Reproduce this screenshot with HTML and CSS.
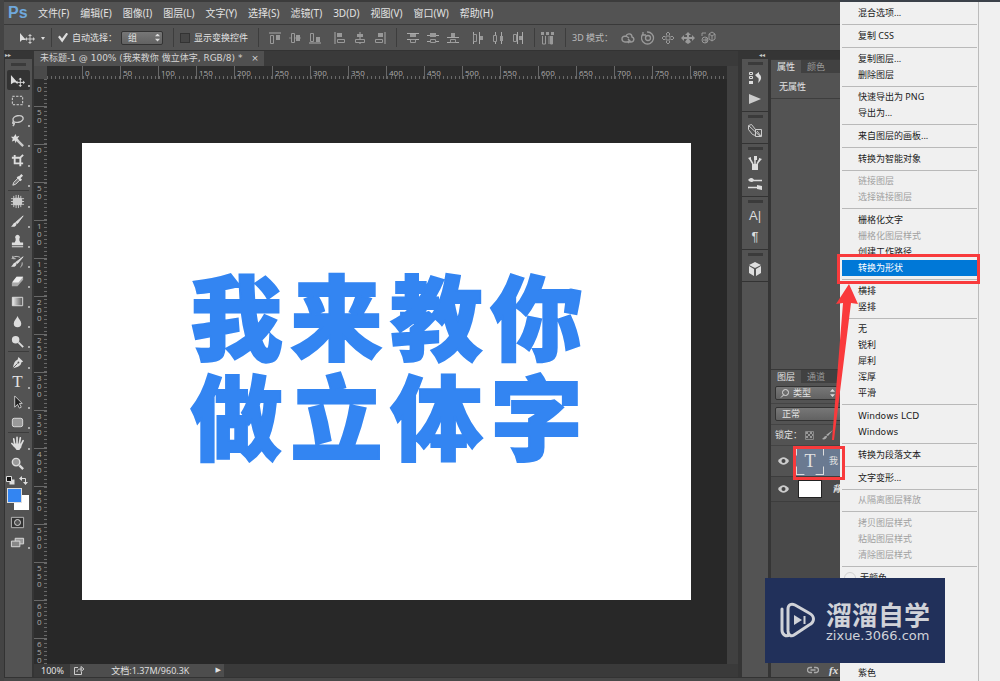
FILE: index.html
```
<!DOCTYPE html>
<html lang="zh-CN">
<head>
<meta charset="utf-8">
<title>Ps</title>
<link rel="stylesheet" href="styles.css">
</head>
<body>
<div class="app">
  <nav class="menubar">
    <span class="logo">Ps</span>
    <button>文件(F)</button><button>编辑(E)</button><button>图像(I)</button><button>图层(L)</button><button>文字(Y)</button><button>选择(S)</button><button>滤镜(T)</button><button>3D(D)</button><button>视图(V)</button><button>窗口(W)</button><button>帮助(H)</button>
  </nav>

  <div class="options">
    <svg class="opt-move" width="28" height="14" viewBox="0 0 28 14"><path d="M1 2v9l2-2h4z" fill="#ddd"/><path d="M11 4v8M7 8h8" stroke="#ccc"/><path d="M11 3l2 2h-4zM11 13l2-2h-4zM6 8l2-2v4zM16 8l-2-2v4z" fill="#ccc"/><path d="M22 6h4l-2 3z" fill="#ddd"/></svg>
    <i class="vsep first"></i>
    <label class="check"><input type="checkbox" checked>自动选择：</label>
    <span class="select group"><select aria-label="自动选择"><option>组</option></select></span>
    <i class="vsep"></i>
    <label class="check"><input type="checkbox">显示变换控件</label>
    <i class="vsep"></i>
    <div class="icons">
      <svg width="12" height="12"><path d="M0 1h12" stroke="#aaa"/><path d="M1.500 3.500h3v8h-3z" fill="none" stroke="#999"/><path d="M7 3h4v5H7z" fill="#999"/></svg>
      <svg width="12" height="12"><path d="M0 6h12" stroke="#888"/><path d="M2.500 1.500h3v9h-3z" fill="#535353" stroke="#999"/><path d="M7 3h4v6H7z" fill="#999"/></svg>
      <svg width="12" height="12"><path d="M0 11h12" stroke="#aaa"/><path d="M1.500 1.500h3v8h-3z" fill="none" stroke="#999"/><path d="M7 5h4v5H7z" fill="#999"/></svg>
    </div>
    <div class="icons">
      <svg width="12" height="12"><path d="M1 0v12" stroke="#aaa"/><path d="M3 1h5v4H3z" fill="#999"/><path d="M3.500 7.500h7v3h-7z" fill="none" stroke="#999"/></svg>
      <svg width="12" height="12"><path d="M6 0v12" stroke="#aaa"/><path d="M3 2h6v3H3z" fill="#999"/><path d="M1.500 7.500h9v3h-9z" fill="#535353" stroke="#999"/></svg>
      <svg width="12" height="12"><path d="M11 0v12" stroke="#aaa"/><path d="M4 1h5v4H4z" fill="#999"/><path d="M1.500 7.500h7v3h-7z" fill="none" stroke="#999"/></svg>
    </div>
    <i class="vsep"></i>
    <div class="icons">
      <svg width="12" height="12"><path d="M0 1.500h12M0 7.500h12" stroke="#aaa"/><path d="M3 2h6v3H3z" fill="#999"/><path d="M3.500 7.500h5v3h-5z" fill="none" stroke="#999"/></svg>
      <svg width="12" height="12"><path d="M0 3.500h12M0 9.500h12" stroke="#aaa"/><path d="M3 1h6v4H3z" fill="#999"/><path d="M3.500 7.500h5v3h-5z" fill="#535353" stroke="#999"/></svg>
      <svg width="12" height="12"><path d="M0 5.500h12M0 10.500h12" stroke="#aaa"/><path d="M4 1h4v4H4z" fill="#999"/><path d="M3.500 7.500h5v3h-5z" fill="none" stroke="#999"/></svg>
    </div>
    <div class="icons">
      <svg width="12" height="12"><path d="M1.500 0v12M7.500 0v12" stroke="#aaa"/><path d="M1.500 2.500h3v7h-3z" fill="none" stroke="#999"/><path d="M8 4h3v4H8z" fill="#999"/></svg>
      <svg width="12" height="12"><path d="M3.500 0v12M9.500 0v12" stroke="#aaa"/><path d="M1.500 3.500h3v6h-3z" fill="#535353" stroke="#999"/><path d="M8 4h3v5H8z" fill="#999"/></svg>
      <svg width="12" height="12"><path d="M5.500 0v12M10.500 0v12" stroke="#aaa"/><path d="M1.500 2.500h3v7h-3z" fill="none" stroke="#999"/><path d="M7 4h3v4H7z" fill="#999"/></svg>
    </div>
    <i class="vsep"></i>
    <svg width="14" height="14"><path d="M1.500 5v8M4.500 5v8h-3M8 5v8M11.500 5v8h-2" fill="none" stroke="#999"/><path d="M0 1h3v3H0zM5 1h3v3H5zM10 1h3v3h-3zM9 5h3v8H9z" fill="#999"/></svg>
    <i class="vsep"></i>
    <span class="mode">3D 模式：</span>
    <div class="icons three-d">
      <svg width="14" height="14" fill="none" stroke="#999" stroke-width="1.400"><path d="M1 8c0-2 2-3 4-3 1-3 6-3 6 1 3 1 2 5-1 5H6M1 8c0 3 4 4 7 2M7 8l2 2-2 2M5 5l3 2"/></svg>
      <svg width="14" height="14" fill="none" stroke="#999" stroke-width="1.300"><path d="M2 3a6 6 0 1 0 4-2M2 1v3h3"/><circle cx="7" cy="7" r="2.500"/></svg>
      <svg width="14" height="14" fill="none" stroke="#999"><path d="M7 1l2 2-1 1v2h2l1-1 2 2-2 2-1-1H8v2l1 1-2 2-2-2 1-1V8H4L3 9 1 7l2-2 1 1h2V4L5 3z"/></svg>
      <svg width="14" height="14"><path d="M7 1l3 3H8v2h3V4l3 3-3 3V8H8l2 3-3 2-3-2 2-3H3v2L0 7l3-3v2h3V4H4z" fill="#999"/></svg>
      <svg width="15" height="14" fill="none" stroke="#999"><path d="M8 3l3-2 3 2v5l-3 2-3-2zM8 3l3 2 3-2M11 5v5"/><circle cx="4" cy="9" r="3"/><path d="M1 5V2h4M5 7v5M2 9h5"/></svg>
    </div>
  </div>

  <main class="work">
    <aside class="tools">
      <div class="dock-head">▸▸</div>
      <i class="grip"></i>
      <button class="active" aria-label="移动"><svg viewBox="0 0 16 16"><path d="M1 2v10l3-2h4z" fill="#ddd"/><path d="M11 6v8M7 10h8" stroke="#ddd"/><path d="M11 5l2 2H9zM11 15l2-2H9zM6 10l2-2v4zM16 10l-2-2v4z" fill="#ddd"/></svg></button>
      <button aria-label="选框"><svg viewBox="0 0 16 16"><path d="M2.500 3.500h11v9h-11z" fill="none" stroke="#ddd" stroke-dasharray="2.500 1.500"/></svg></button>
      <button aria-label="套索"><svg viewBox="0 0 16 16" fill="none" stroke="#ccc" stroke-width="1.500"><ellipse cx="8.500" cy="6.500" rx="5.500" ry="3.500" transform="rotate(-12 8 6)"/><path d="M4 9c-2 1-1 3 0 2s1 1-1 3"/></svg></button>
      <button aria-label="魔棒"><svg viewBox="0 0 16 16"><path d="M7 7l7 7" stroke="#ccc" stroke-width="2.500"/><path d="M6 1l1 3 3-1-2 3 2 2-3 0-1 3-1-3-3 1 1-3-2-2 3 0z" fill="#ddd"/></svg></button>
      <button aria-label="裁剪"><svg viewBox="0 0 16 16" fill="none" stroke="#ddd" stroke-width="2"><path d="M5 2v9h9M2 5h9v9M11 5l3-3"/></svg></button>
      <button aria-label="吸管"><svg viewBox="0 0 16 16"><path d="M3 13l1-3 5-5 2 2-5 5z" fill="#777" stroke="#ddd"/><path d="M8 4l4 4M10 5l3-3" stroke="#ddd" stroke-width="2.500"/></svg></button>
      <hr>
      <button aria-label="修复"><svg viewBox="0 0 16 16"><path d="M4 2v12M6.500 1v14M9 1v14M11.500 2v12M1 5h14M1 8h14M1 11h14" stroke="#ccc"/><rect x="3" y="4" width="10" height="8" rx="3" fill="#ccc"/></svg></button>
      <button aria-label="画笔"><svg viewBox="0 0 16 16"><path d="M14 2l-6 8-2-1z" fill="#ddd" stroke="#ddd"/><path d="M7 10c0 4-4 4-6 3 2 0 2-4 5-4z" fill="#ddd"/></svg></button>
      <button aria-label="图章"><svg viewBox="0 0 16 16" fill="#ddd"><path d="M6 7V5a2.500 2.500 0 1 1 4 0v2l1 2h3v3H2V9h3zM2 13h12v1H2z"/></svg></button>
      <button aria-label="历史画笔"><svg viewBox="0 0 16 16"><path d="M14 3l-6 7-2-1z" stroke="#ddd" fill="#ddd"/><path d="M7 10c0 4-4 4-6 3 2 0 2-4 5-4z" fill="#ddd"/><path d="M2 5c2-3 7-3 9-1M3 2v3h3M11 14c2-1 2-3 2-5" fill="none" stroke="#ccc"/></svg></button>
      <button aria-label="橡皮擦"><svg viewBox="0 0 16 16"><path d="M7 3h7v3l-6 7H2v-3z" fill="#aaa"/><path d="M7 3h7l-5 6H2z" fill="#eee"/></svg></button>
      <button aria-label="渐变"><svg viewBox="0 0 16 16"><defs><linearGradient id="fade"><stop stop-color="#eee"/><stop offset="1" stop-color="#555"/></linearGradient></defs><path d="M2.500 3.500h11v9h-11z" fill="url(#fade)" stroke="#ddd"/></svg></button>
      <button aria-label="模糊"><svg viewBox="0 0 16 16"><path d="M8 2c1 3 4 5 4 8a4 4 0 0 1-8 0c0-3 3-5 4-8z" fill="#ddd"/></svg></button>
      <button aria-label="减淡"><svg viewBox="0 0 16 16"><circle cx="6" cy="6" r="4" fill="#ddd"/><path d="M9 9l5 5" stroke="#ddd" stroke-width="2"/></svg></button>
      <hr>
      <button aria-label="钢笔"><svg viewBox="0 0 16 16"><path d="M9 2l5 5-2 1c0 3-3 5-9 6 1-5 2-8 5-9z" fill="#ddd"/><path d="M3 14l5-5" stroke="#555"/><circle cx="9" cy="8" r="1" fill="#555"/></svg></button>
      <button aria-label="文字"><span class="type">T</span></button>
      <button aria-label="路径选择"><svg viewBox="0 0 16 16"><path d="M5 1v12l3-3 2 4 2-1-2-4h3z" fill="#222" stroke="#ccc"/></svg></button>
      <button aria-label="圆角矩形"><svg viewBox="0 0 16 16"><rect x="2.500" y="3.500" width="11" height="9" rx="2" fill="#999" stroke="#ddd"/></svg></button>
      <hr>
      <button aria-label="抓手"><svg viewBox="0 0 16 16"><path d="M5 9L4 3M7.500 8V1.500M10 8l1-6M12 9l2-4M5 11L2 8" stroke="#ddd" stroke-width="1.800" stroke-linecap="round"/><path d="M4 8h9l-1 4-2 3H7l-3-4z" fill="#ddd"/></svg></button>
      <button class="plain" aria-label="缩放"><svg viewBox="0 0 16 16"><circle cx="6.500" cy="6.500" r="4" fill="#999" stroke="#ddd" stroke-width="1.500"/><path d="M10 10l4 4" stroke="#ddd" stroke-width="2.500"/></svg></button>
      <div class="mini">
        <svg width="9" height="9"><path d="M3.500 3.500h5v5h-5z" fill="#ddd"/><path d="M.5.5h5v5h-5z" fill="#111" stroke="#ddd"/></svg>
        <svg width="9" height="9"><path d="M2 2.500h4.500V7" fill="none" stroke="#ddd"/><path d="M0 2.500L3 0v5zM6.500 9L4 6h5z" fill="#ddd"/></svg>
      </div>
      <div class="swatches"><button class="back" aria-label="背景色"></button><button class="fore" aria-label="前景色"></button></div>
      <button class="plain" aria-label="快速蒙版"><svg viewBox="0 0 16 16"><path d="M1.500 2.500h13v11h-13z" fill="#333" stroke="#bbb"/><circle cx="8" cy="8" r="3.200" fill="#555" stroke="#ddd"/></svg></button>
      <button aria-label="屏幕模式"><svg viewBox="0 0 16 16"><path d="M5.500 3.500h9v6h-9z" fill="#999" stroke="#ddd"/><path d="M1.500 6.500h9v6h-9z" fill="#888" stroke="#ddd"/></svg></button>
    </aside>

    <section class="doc">
      <div class="tabs"><span class="tab">未标题-1 @ 100% (我来教你 做立体字, RGB/8) * <button aria-label="关闭">×</button></span></div>
      <div class="board">
        <div class="corner"></div>
        <div class="ruler-x"><span class="lead"></span><span>0</span><span>50</span><span>100</span><span>150</span><span>200</span><span>250</span><span>300</span><span>350</span><span>400</span><span>450</span><span>500</span><span>550</span><span>600</span><span>650</span><span>700</span><span>750</span><span>800</span></div>
        <div class="gutter"></div>
        <div class="ruler-y"><span class="lead">0</span><span>50</span><span>0</span><span>50</span><span>100</span><span>150</span><span>200</span><span>250</span><span>300</span><span>350</span><span>400</span><span>450</span><span>500</span><span>550</span><span>600</span><span>650</span></div>
        <div class="stage"><div class="paper"><p><span>我</span><span>来</span><span>教</span><span>你</span><span>做</span><span>立</span><span>体</span><span>字</span></p></div></div>
      </div>
      <div class="status">
        <span class="zoom">100%</span>
        <div class="info"><svg width="12" height="10" fill="none" stroke="#ccc"><path d="M5 1.500H1.500v7h7V6"/><path d="M4 6c0-3 2-3 5-3M8 .5L11 3 8 5.500z"/></svg><span>文档:1.37M/960.3K</span><b>▶</b></div>
      </div>
    </section>

    <aside class="dock">
      <div class="dock-head">◂◂</div>
      <div class="set"><i class="grip"></i>
        <svg viewBox="0 0 16 16"><path d="M2.500 2.500h3v2h-3zM2.500 6.500h3v2h-3z" fill="none" stroke="#ddd"/><path d="M2 11h4v3H2z" fill="#ddd"/><path d="M8 5l4-3v2c3 2 3 6-1 9 1-3 1-5-.5-6L11 8z" fill="#ddd"/></svg>
        <svg viewBox="0 0 16 16"><path d="M2 3l12 5-12 5z" fill="#ccc"/></svg></div>
      <div class="set"><i class="grip"></i>
        <svg viewBox="0 0 16 16" fill="none" stroke="#ccc"><path d="M1.500 2.500l3-1 4 5v6l-3-1-4-5zM8.500 6.500h6v7h-6zM2 3l12 11M10 8l4 5"/></svg></div>
      <div class="set"><i class="grip"></i>
        <svg viewBox="0 0 16 16"><path d="M5 9h6v6H5z" fill="#ddd"/><path d="M6 9L3 4M8 9V2M10 9l3-5" stroke="#ddd" stroke-width="1.500"/><path d="M1 3l3-1v4zM7 1h3v4H7zM12 3l3 1-3 3z" fill="#ddd"/></svg>
        <svg viewBox="0 0 16 16"><path d="M2 4.500h13M1 11.500h13" stroke="#ddd" stroke-width="1.500"/><path d="M1 4c3-3 5-2 6 0-1 3-4 2-6 0zM10 9l5 1v4l-5-1z" fill="#ddd"/></svg></div>
      <div class="set"><i class="grip"></i>
        <span class="glyph">A|</span><span class="glyph">¶</span></div>
      <div class="set"><i class="grip"></i>
        <svg viewBox="0 0 16 16"><path d="M8 1l6 3-6 3-6-3zM2 5l5 3v7l-5-3zM14 5L9 8v7l5-3z" fill="#ddd"/></svg></div>
    </aside>

    <aside class="panels">
      <div class="panel-head"></div>
      <div class="panel-tabs"><button class="on">属性</button><button>颜色</button></div>
      <div class="props">无属性</div>
      <div class="blank"></div>
      <div class="panel-tabs"><button class="on">图层</button><button>通道</button></div>
      <div class="line"><span class="select kind"><svg width="9" height="9" fill="none" stroke="#ddd"><circle cx="5.500" cy="3.500" r="3"/><path d="M3.500 6L1 8.500"/></svg><select aria-label="类型"><option>类型</option></select></span></div>
      <div class="line"><span class="select blend"><select aria-label="混合模式"><option>正常</option></select></span></div>
      <div class="line lock">锁定：<svg width="9" height="9"><path d="M.5.5h8v8h-8z" fill="#555" stroke="#888"/><path d="M1 1h2v2H1zM5 1h2v2H5zM3 3h2v2H3zM7 3h1v2H7zM1 5h2v2H1zM5 5h2v2H5z" fill="#999"/></svg><svg width="12" height="10"><path d="M11 0L6 6 4 5zM5 6c0 3-3 4-5 3 2-1 2-3 4-3z" fill="#aaa"/></svg></div>
      <div class="layer chosen"><svg class="eye" width="11" height="8"><path d="M0 4c3-5 8-5 11 0-3 5-8 5-11 0z" fill="#ccc"/><circle cx="5.500" cy="4" r="2" fill="#444"/></svg><span class="thumb text">T</span><span>我</span></div>
      <div class="layer"><svg class="eye" width="11" height="8"><path d="M0 4c3-5 8-5 11 0-3 5-8 5-11 0z" fill="#ccc"/><circle cx="5.500" cy="4" r="2" fill="#444"/></svg><span class="thumb"></span><span class="locked">背</span></div>
      <div class="rest"></div>
      <div class="panel-foot"><svg width="12" height="8" fill="none" stroke="#aaa" stroke-width="1.300"><path d="M5 1.500H3a2.500 2.500 0 0 0 0 5h2M7 1.500h2a2.500 2.500 0 0 1 0 5H7M3.500 4h5"/></svg><span>fx</span></div>
    </aside>
  </main>
  <div class="edge"></div>
</div>

<div class="context">
  <div class="menu" role="menu">
    <button>混合选项...</button><hr>
    <button>复制 CSS</button><hr>
    <button>复制图层...</button><button>删除图层</button><hr class="tight">
    <button>快速导出为 PNG</button><button>导出为...</button><hr>
    <button>来自图层的画板...</button><hr>
    <button>转换为智能对象</button><hr class="tight">
    <button disabled>链接图层</button><button disabled>选择链接图层</button><hr>
    <button>栅格化文字</button><button disabled>栅格化图层样式</button><button>创建工作路径</button><button class="hot">转换为形状</button><hr>
    <button>横排</button><button>竖排</button><hr class="tight">
    <button>无</button><button>锐利</button><button>犀利</button><button>浑厚</button><button>平滑</button><hr>
    <button class="latin">Windows LCD</button><button class="latin">Windows</button><hr>
    <button>转换为段落文本</button><hr>
    <button>文字变形...</button><hr class="tight">
    <button disabled>从隔离图层释放</button><hr>
    <button disabled>拷贝图层样式</button><button disabled>粘贴图层样式</button><button disabled>清除图层样式</button><hr>
    <button class="radio">无颜色</button>
    <button class="last">紫色</button>
  </div>
</div>

<div class="mark item-mark"></div>
<div class="mark layer-mark"></div>
<svg class="arrow" width="30" height="160" viewBox="0 0 30 160"><path d="M20 0l9 20-7-1L5 156H3L14 19l-7 1z" fill="#fa3a3c"/></svg>

<div class="brand">
  <svg width="36" height="38" viewBox="0 0 36 38" fill="none" stroke="#d0d2d8" stroke-width="3" stroke-linecap="round"><path d="M2 7v21c0 5 4 7 8 5M8 28V7c0-4 3-6 7-4l14 8c6 3 6 9 0 12L14 33c-3 2-6 0-6-4"/><path d="M14 13l8 5-8 5z" fill="#d0d2d8" stroke="none"/><path d="M24.500 14v8" stroke-width="2" stroke-linecap="butt"/></svg>
  <div><strong>溜溜自学</strong><span>zixue.3066.com</span></div>
</div>
</body>
</html>
```
FILE: styles.css
```
* { box-sizing: border-box; }
body {
  margin: 0;
  height: 100vh;
  position: relative;
  overflow: hidden;
  background: #535353;
  color: #e2e2e2;
  font: 10px/14px "Noto Sans", "Noto Sans CJK SC", sans-serif;
}
button, select, input { font: inherit; color: inherit; margin: 0; padding: 0; border: 0; background: none; }
svg { display: block; flex: none; }
.app { height: 100%; display: flex; flex-direction: column; border-left: 4px solid #444; }

.menubar { height: 25px; flex: none; display: flex; align-items: center; gap: 11px; border-top: 2px solid #3c3c3c; border-bottom: 1px solid #393939; padding-left: 4px; white-space: nowrap; }
.logo { font: bold 16px/20px "Liberation Sans", sans-serif; color: #6fa8dc; width: 19px; }

.options { height: 26px; flex: none; display: flex; align-items: center; gap: 4px; padding-left: 15px; border-bottom: 1px solid #333; white-space: nowrap; font-size: 9px; }
.vsep { width: 1px; height: 19px; background: #3d3d3d; margin: 0 2px 0 6px; flex: none; }
.vsep.first { margin-left: 0; }
.check { display: flex; align-items: center; gap: 4px; }
.check input { appearance: none; width: 10px; height: 10px; background: #464646; border: 1px solid #333; }
.check input:checked { background: #ddd; clip-path: polygon(0 45%, 18% 30%, 40% 60%, 85% 0, 100% 15%, 42% 100%); border: 0; }
.select { display: flex; align-items: center; position: relative; height: 14px; background: linear-gradient(#777, #626262); border: 1px solid #333; border-radius: 2px; padding-left: 6px; }
.select select { appearance: none; flex: 1; min-width: 0; height: 12px; line-height: 12px; outline: 0; }
.group { width: 42px; }
.group::after, .kind::after { content: ""; width: 5px; height: 8px; margin-right: 2px; background: #ddd; clip-path: polygon(50% 0, 100% 35%, 0 35%, 0 65%, 100% 65%, 50% 100%, 0 65%, 0 35%); }
.icons { display: flex; gap: 8px; margin-left: 4px; }
.icons + .icons { margin-left: 9px; }
.icons.three-d { gap: 6px; margin-left: 4px; }
.mode { color: #bbb; }

.work { flex: 1; min-height: 0; display: flex; }
.dock-head { height: 8px; background: #353535; color: #ccc; font: 6px/8px "DejaVu Sans", sans-serif; flex: none; }
.grip { display: block; height: 3px; width: 15px; margin: 4px auto; background: #3b3b3b; flex: none; }

.tools { width: 28px; flex: none; border-left: 1px solid #333; display: flex; flex-direction: column; background: #535353; }
.tools > button { height: 20px; display: grid; place-items: center; position: relative; margin: 0 2px; padding-right: 2px; flex: none; }
.tools > button svg { width: 15px; height: 15px; }
.tools > button::after { content: ""; position: absolute; right: 0; bottom: 3px; width: 2px; height: 2px; background: #aaa; }
.tools > .plain::after { display: none; }
.tools .active { background: #333; border-radius: 2px; }
.tools hr { margin: 0 3px; border: 0; border-top: 1px solid #3c3c3c; flex: none; height: 1px; }
.type { font: 17px/18px "Liberation Serif", serif; }
.mini { display: flex; justify-content: space-between; padding: 3px 4px 3px 1px; flex: none; }
.swatches { display: grid; grid-template-columns: 7px 8px 7px; grid-template-rows: 7px 8px 7px; margin: 0 0 2px 2px; flex: none; }
.back { grid-area: 2 / 2 / 4 / 4; background: #fff; }
.fore { grid-area: 1 / 1 / 3 / 3; background: #3385f2; border: 1px solid #ddd; }

.doc { flex: 1; min-width: 0; display: flex; flex-direction: column; border-left: 2px solid #353535; background: #3a3a3a; }
.tabs { height: 15px; flex: none; display: flex; }
.tab { background: #505050; padding: 0 5px 0 6px; font-family: "DejaVu Sans", "Noto Sans CJK SC", sans-serif; font-size: 9px; line-height: 15px; white-space: nowrap; color: #d5d5d5; }
.tab button { margin-left: 6px; line-height: 12px; }
.board { flex: 1; min-height: 0; display: grid; grid-template: 13px minmax(0, 1fr) / 13px minmax(0, 1fr) 11px; background: #282828; }
.corner { background: #4a4a4a; }
.ruler-x { display: flex; overflow: hidden; background: repeating-linear-gradient(90deg, #686868 0 1px, #2d2d2d 1px 4px) bottom / 100% 3px no-repeat #2d2d2d; font: 8px/13px "Open Sans", sans-serif; color: #aaa; }
.ruler-x span { flex: none; width: 38px; border-left: 1px solid #686868; padding-left: 2px; }
.ruler-x .lead { width: 35px; border: 0; }
.gutter { grid-area: 1 / 3 / 3 / 4; background: #404040; }
.ruler-y { grid-column: 1; overflow: hidden; background: repeating-linear-gradient(#686868 0 1px, #2d2d2d 1px 4px) right / 3px 100% no-repeat #2d2d2d; font: 8px/8px "Open Sans", sans-serif; color: #aaa; }
.ruler-y span { display: block; height: 38px; border-top: 1px solid #686868; padding: 1px 7px 0 3px; width: 13px; word-break: break-all; }
.ruler-y .lead { height: 27px; border: 0; padding-top: 6px; }
.ruler-y span:last-child { height: auto; }
.stage { display: grid; align-items: center; min-width: 0; padding: 0 36px 0 35px; }
.paper { aspect-ratio: 4 / 3; background: #fff; display: grid; place-items: center; align-content: center; }
.paper p { display: grid; grid-template-columns: repeat(4, 100px); margin: 0 0 18px; font: 900 92px/100px "Noto Sans CJK SC", sans-serif; color: #3385f2; -webkit-text-stroke: 2px #3385f2; text-align: center; }
.status { height: 13px; flex: none; display: flex; align-items: center; font-size: 9px; line-height: 13px; }
.zoom { width: 36px; padding-left: 7px; }
.info { display: flex; align-items: center; width: 154px; padding: 0 3px; background: #4d4d4d; }
.info span { flex: 1; text-align: center; font-family: "Open Sans", "Noto Sans CJK SC", sans-serif; }
.info b { font: 7px/13px "DejaVu Sans", sans-serif; }

.dock { width: 33px; flex: none; border: solid #353535; border-width: 0 3px 0 4px; }
.dock .dock-head { text-align: right; padding-right: 3px; }
.set { display: flex; flex-direction: column; align-items: center; gap: 5px; border-bottom: 1px solid #333; padding-bottom: 4px; }
.set .grip { margin: 3px 0 0; }
.set svg { width: 16px; height: 16px; }
.glyph { font: 13px/16px "Liberation Sans", sans-serif; height: 16px; color: #ddd; }

.panels { width: 229px; flex: none; display: flex; flex-direction: column; font-size: 9px; }
.panel-head { height: 8px; background: #353535; }
.panel-tabs { display: flex; height: 14px; background: #414141; flex: none; border-top: 1px solid #383838; }
.panel-tabs button { width: 30px; color: #999; line-height: 13px; }
.panel-tabs .on { background: #535353; color: #e2e2e2; }
.props { height: 26px; padding: 7px 8px; border-bottom: 1px solid #3e3e3e; flex: none; }
.blank { flex: 1; }
.line { height: 21px; padding: 3px 4px; border-bottom: 1px solid #444; flex: none; }
.kind { width: 63px; gap: 4px; padding-left: 4px; }
.blend { width: 110px; }
.lock { display: flex; align-items: center; gap: 3px; }
.lock svg:last-child { margin-left: 5px; }
.layer { display: flex; align-items: center; height: 31px; padding-left: 7px; border-bottom: 1px solid #3d3d3d; flex: none; background: #4b4b4b; }
.layer + .layer { height: 25px; }
.layer.chosen { background: linear-gradient(90deg, #535353 22px, #6a7a91 22px); }
.thumb { width: 24px; height: 18px; margin: 0 10px 0 9px; border: 1px solid #222; background: #fff; }
.thumb.text { width: 28px; height: 28px; margin: 0 5px 0 7px; border: 1px solid #ddd; background: transparent; font: 18px/26px "Liberation Serif", serif; text-align: center; clip-path: polygon(0 0, 30% 0, 30% 5%, 70% 5%, 70% 0, 100% 0, 100% 30%, 95% 30%, 95% 70%, 100% 70%, 100% 100%, 70% 100%, 70% 95%, 30% 95%, 30% 100%, 0 100%, 0 70%, 5% 70%, 5% 30%, 0 30%); }
.locked { font-weight: bold; font-style: italic; }
.rest { height: 159px; background: #494949; flex: none; }
.panel-foot { height: 16px; display: flex; align-items: center; gap: 10px; padding-left: 36px; border-top: 1px solid #333; flex: none; }
.panel-foot span { font: italic bold 11px/14px "Liberation Serif", serif; }
.edge { height: 4px; flex: none; border-top: 1px solid #333; background: #484848; }

.context { position: absolute; top: 0; right: 0; bottom: 0; width: 160px; background: #f0f0f0; border-top: 2px solid #3b4149; color: #1b1b1b; font-size: 9px; }
.menu { width: 139px; height: 100%; display: flex; flex-direction: column; padding: 3px 1px 0 2px; border-right: 1px solid #bbb; }
.menu button { height: 16px; line-height: 16px; padding-left: 16px; text-align: left; flex: none; }
.menu button:disabled { color: #a0a0a0; }
.menu .hot { background: #0078d7; color: #fff; }
.menu .latin { font-family: "DejaVu Sans", sans-serif; }
.menu hr { width: 100%; height: 1px; margin: 3px 0; border: 0; background: #b9b9b9; flex: none; }
.menu .tight { margin-bottom: 2px; }
.menu .radio { display: flex; align-items: center; gap: 4px; padding-left: 2px; }
.radio::before { content: ""; width: 10px; height: 10px; border: 1px solid #d2d2d2; border-radius: 50%; }
.menu .last { margin-top: auto; }
.mark { position: absolute; border: 3px solid #f83a3c; }
.item-mark { right: 20px; top: 254px; width: 143px; height: 30px; }
.layer-mark { right: 155px; top: 446px; width: 52px; height: 34px; }
.arrow { position: absolute; right: 141px; top: 284px; }
.brand { position: absolute; right: 55px; bottom: 18px; width: 180px; height: 85px; display: flex; align-items: center; gap: 10px; padding-left: 15px; background: #21305a; color: #d0d2d8; }
.brand div { display: flex; flex-direction: column; }
.brand strong { font: 700 26px/30px "Noto Sans CJK SC", sans-serif; }
.brand span { font: 13px/14px "DejaVu Sans", sans-serif; }
```
